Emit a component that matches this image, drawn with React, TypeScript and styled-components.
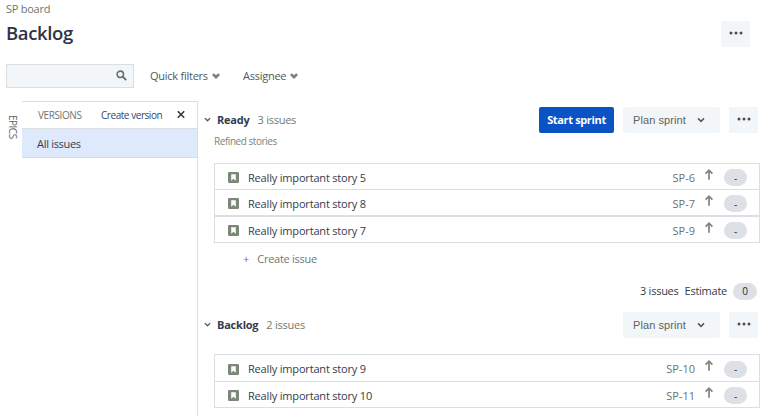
import React from "react";
import styled, { createGlobalStyle } from "styled-components";

const GlobalStyle = createGlobalStyle`
  * { box-sizing: border-box; }
  body {
    margin: 0;
    background: #fff;
    overflow: hidden;
    font-family: "Open Sans", "Noto Sans", sans-serif;
    font-size: 11px;
    color: #343c4e;
  }
`;

const Page = styled.main`
  display: flex;
  flex-direction: column;
  width: 765px;
  height: 416px;
  overflow: hidden;
`;

const Label = styled.span<{ $size?: number; $track?: number; $color?: string; $weight?: number }>`
  font-size: ${(p) => p.$size ?? 11}px;
  letter-spacing: ${(p) => p.$track ?? 0}px;
  color: ${(p) => p.$color ?? "#343c4e"};
  font-weight: ${(p) => p.$weight ?? 400};
  line-height: 16px;
  white-space: nowrap;
`;

const Top = styled.header`
  display: flex;
  justify-content: space-between;
  height: 64px;
  padding: 1px 15px 0 6px;
`;

const Titles = styled.div`
  display: flex;
  flex-direction: column;
`;

const Title = styled.h1`
  margin: 3px 0 0;
  font-size: 18.5px;
  line-height: 26px;
  font-weight: 600;
  letter-spacing: -0.35px;
  color: #2c3448;
`;

const MoreButton = styled.button`
  display: flex;
  align-items: center;
  justify-content: center;
  width: 29px;
  height: 26px;
  padding: 0 0 2px;
  border: 0;
  border-radius: 2px;
  background: #f3f6f8;
`;

const TopMore = styled.div`
  padding-top: 20px;
`;

const Filters = styled.div`
  display: flex;
  align-items: center;
  height: 24px;
  padding-left: 6px;
`;

const Search = styled.div`
  display: flex;
  align-items: center;
  justify-content: flex-end;
  width: 128px;
  height: 24px;
  padding: 0 6px 2px 0;
  border: 1px solid #dcdfe2;
  background: #f3f6f8;
`;

const Filter = styled.div<{ $left: number; $width: number }>`
  display: flex;
  align-items: center;
  justify-content: space-between;
  width: ${(p) => p.$width}px;
  margin-left: ${(p) => p.$left}px;
`;

const Body = styled.div`
  display: flex;
  height: 315px;
  margin-top: 13px;
`;

const EpicsTab = styled.div`
  width: 22px;
  padding: 14px 0 0 5px;
`;

const Vertical = styled.span`
  display: block;
  writing-mode: vertical-rl;
  font-size: 10px;
  line-height: 16px;
  letter-spacing: -0.5px;
  color: #5c675f;
`;

const Versions = styled.aside`
  width: 176px;
  border-top: 1px solid #dcdfe2;
  border-right: 1px solid #dcdfe2;
`;

const VersionsHead = styled.div`
  display: flex;
  align-items: center;
  height: 27px;
  padding: 0 12px 0 16px;
  border-bottom: 1px solid #dcdfe2;
`;

const CreateVersion = styled.div`
  display: flex;
  width: 76px;
  margin-left: auto;
`;

const VersionItem = styled.div`
  display: flex;
  align-items: center;
  height: 29px;
  padding: 1px 0 0 15px;
  border-bottom: 1px solid #d5dbe2;
  background: #deeafb;
`;

const Board = styled.section`
  display: flex;
  flex-direction: column;
  width: 567px;
  padding: 6px 5px 0 6px;
`;

const GroupHead = styled.div`
  display: flex;
  align-items: center;
  height: 26px;
`;

const GroupTitle = styled.div`
  display: flex;
  align-items: center;
`;

const Toggle = styled.span`
  display: flex;
  width: 13px;
  padding-bottom: 2px;
`;

const Count = styled.div`
  display: flex;
  padding-left: 8px;
`;

const Actions = styled.div`
  display: flex;
  gap: 9px;
  margin: 0 2px 0 auto;
`;

const StartButton = styled.button`
  width: 75px;
  height: 26px;
  padding: 0 0 2px;
  border: 0;
  border-radius: 2px;
  background: #0b52c4;
  color: #fff;
  font: 700 11px "Open Sans", sans-serif;
  letter-spacing: -0.35px;
`;

const PlanButton = styled.button`
  display: flex;
  align-items: center;
  justify-content: space-between;
  width: 97px;
  height: 26px;
  padding: 0 15px 0 10px;
  border: 0;
  border-radius: 2px;
  background: #f3f6f8;
  color: #5b635f;
  font: 11px "Liberation Sans", Arial, sans-serif;
  letter-spacing: 0.08px;
`;

const Goal = styled.div`
  display: flex;
  height: 30px;
  padding-left: 10px;
`;

const List = styled.ul`
  width: 546px;
  margin: 0 0 0 10px;
  padding: 0;
  list-style: none;
  border: 1px solid #dcdfe2;
`;

const Row = styled.li<{ $height: number; $line: number }>`
  display: flex;
  align-items: center;
  height: ${(p) => p.$height}px;
  padding: 2px 12px 0 13px;
  border-bottom: ${(p) => p.$line}px solid #dcdfe2;
`;

const RowName = styled.div`
  display: flex;
  align-items: center;
  gap: 9px;
  flex: 1;
`;

const RowArrow = styled.span`
  display: flex;
  width: 10px;
  height: 18px;
  margin: 0 10px 0 9px;
`;

const Pill = styled.span<{ $wide?: boolean }>`
  display: flex;
  align-items: center;
  justify-content: center;
  width: ${(p) => (p.$wide ? 24 : 23)}px;
  height: 17px;
  border-radius: 9px;
  background: #dde0e5;
  font-size: 10px;
  color: #222b3c;
`;

const CreateIssue = styled.div`
  display: flex;
  align-items: center;
  gap: 8px;
  height: 32px;
  padding-left: 39px;
`;

const Summary = styled.div`
  display: flex;
  align-items: center;
  justify-content: flex-end;
  gap: 6px;
  height: 32px;
  padding-right: 3px;
`;

const Dots = () => (
  <svg width="14" height="4" viewBox="0 0 14 4" fill="#465052">
    <circle cx="2" cy="2" r="1.5" />
    <circle cx="7" cy="2" r="1.5" />
    <circle cx="12" cy="2" r="1.5" />
  </svg>
);

const Magnifier = () => (
  <svg width="11" height="11" viewBox="0 0 11 11" fill="none" stroke="#68746b">
    <circle cx="4.3" cy="4.3" r="3.2" strokeWidth="1.6" />
    <path d="M6.8 6.8 10.2 10.1" strokeWidth="2" />
  </svg>
);

const ThickChevron = () => (
  <svg width="8" height="7" viewBox="0 0 8 7" fill="none" stroke="#758076" strokeWidth="2.5">
    <path d="M.9 1.1 4 4.2 7.1 1.1" />
  </svg>
);

const Chevron = ({ size = 8 }: { size?: number }) => (
  <svg width={size} height={size} viewBox="0 0 8 8" fill="none" stroke="#4f5b58" strokeWidth="1.5">
    <path d="M1 2.4 4 5.4 7 2.4" />
  </svg>
);

const Cross = () => (
  <svg width="8" height="8" viewBox="0 0 8 8" fill="none" stroke="#303a45" strokeWidth="1.6">
    <path d="M.8.3 7.2 6.7M7.2.3.8 6.7" />
  </svg>
);

const StoryIcon = () => (
  <svg width="11" height="11" viewBox="0 0 11 11">
    <rect width="11" height="11" rx="1.2" fill="#7b8878" />
    <path d="M3.2 2.2h4.6v6.6L5.5 6.7 3.2 8.8z" fill="#fff" />
  </svg>
);

const Arrow = () => (
  <svg width="10" height="12" viewBox="0 0 10 12" fill="none" stroke="#7b8878" strokeWidth="1.7">
    <path d="M5 10.8V1M1.6 4.6 5 1.2 8.4 4.6" />
  </svg>
);

type Issue = { name: string; code: string; height: number; line: number };

const ready: Issue[] = [
  { name: "Really important story 5", code: "SP-6", height: 26, line: 1 },
  { name: "Really important story 8", code: "SP-7", height: 27, line: 2 },
  { name: "Really important story 7", code: "SP-9", height: 25, line: 0 },
];

const backlog: Issue[] = [
  { name: "Really important story 9", code: "SP-10", height: 27, line: 1 },
  { name: "Really important story 10", code: "SP-11", height: 25, line: 0 },
];

const Issues = ({ items }: { items: Issue[] }) => (
  <List>
    {items.map((issue) => (
      <Row key={issue.code} $height={issue.height} $line={issue.line}>
        <RowName>
          <StoryIcon />
          <Label $track={-0.18}>{issue.name}</Label>
        </RowName>
        <Label $color="#68736b" $track={0}>{issue.code}</Label>
        <RowArrow><Arrow /></RowArrow>
        <Pill>-</Pill>
      </Row>
    ))}
  </List>
);

const GroupHeader = ({ name, count, start }: { name: string; count: string; start?: boolean }) => (
  <GroupHead>
    <GroupTitle>
      <Toggle><Chevron size={7} /></Toggle>
      <Label $weight={700} $track={-0.22}>{name}</Label>
      <Count><Label $color="#6f7a72" $track={-0.25}>{count}</Label></Count>
    </GroupTitle>
    <Actions>
      {start && <StartButton>Start sprint</StartButton>}
      <PlanButton>Plan sprint<Chevron /></PlanButton>
      <MoreButton aria-label="More"><Dots /></MoreButton>
    </Actions>
  </GroupHead>
);

const BacklogGroup = styled.div`
  margin-top: 5px;
`;

const Spacer = styled.div`
  height: 16px;
`;

export default function App() {
  return (
    <Page>
      <GlobalStyle />
      <Top>
        <Titles>
          <Label $color="#6c776f" $track={-0.25}>SP board</Label>
          <Title>Backlog</Title>
        </Titles>
        <TopMore><MoreButton aria-label="More"><Dots /></MoreButton></TopMore>
      </Top>
      <Filters>
        <Search><Magnifier /></Search>
        <Filter $left={16} $width={70}>
          <Label $color="#4e5a5c" $track={-0.25}>Quick filters</Label>
          <ThickChevron />
        </Filter>
        <Filter $left={23} $width={55}>
          <Label $color="#4e5a5c" $track={-0.25}>Assignee</Label>
          <ThickChevron />
        </Filter>
      </Filters>
      <Body>
        <EpicsTab><Vertical>EPICS</Vertical></EpicsTab>
        <Versions>
          <VersionsHead>
            <Label $size={10} $color="#6c776f" $track={-0.4}>VERSIONS</Label>
            <CreateVersion>
              <Label $size={10} $color="#34466a" $track={-0.45}>Create version</Label>
            </CreateVersion>
            <Cross />
          </VersionsHead>
          <VersionItem><Label $track={-0.3}>All issues</Label></VersionItem>
        </Versions>
        <Board>
          <GroupHeader name="Ready" count="3 issues" start />
          <Goal><Label $size={10} $color="#7b857d" $track={-0.45}>Refined stories</Label></Goal>
          <Issues items={ready} />
          <CreateIssue>
            <Label $color="#6f7a72">+</Label>
            <Label $color="#6f7a72" $track={-0.28}>Create issue</Label>
          </CreateIssue>
          <Summary>
            <Label $track={-0.25}>3 issues</Label>
            <Label $track={-0.25}>Estimate</Label>
            <Pill $wide>0</Pill>
          </Summary>
          <BacklogGroup>
            <GroupHeader name="Backlog" count="2 issues" />
            <Spacer />
            <Issues items={backlog} />
          </BacklogGroup>
        </Board>
      </Body>
    </Page>
  );
}
